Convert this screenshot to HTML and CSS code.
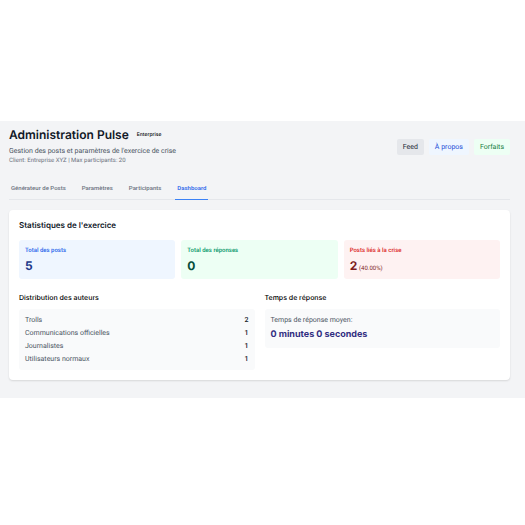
FILE: index.html
```html
<!doctype html>
<html lang="fr">
<head>
  <meta charset="utf-8">
  <title>Administration Pulse</title>
  <meta name="viewport" content="width=device-width, initial-scale=1">
  <link rel="stylesheet" href="styles.css">
</head>
<body>
  <div class="admin-page">
    <header class="page-header">
      <div>
        <div class="title-row">
          <h1>Administration Pulse</h1>
          <span class="plan-badge">Enterprise</span>
        </div>
        <p class="subtitle">Gestion des posts et paramètres de l'exercice de crise</p>
        <p class="client-info">Client: Entreprise XYZ | Max participants: 20</p>
      </div>
      <nav class="header-links">
        <a href="#feed" class="header-link gray">Feed</a>
        <a href="#about" class="header-link blue">À propos</a>
        <a href="#plans" class="header-link green">Forfaits</a>
      </nav>
    </header>

    <div class="tabs">
      <button type="button" class="tab">Générateur de Posts</button>
      <button type="button" class="tab">Paramètres</button>
      <button type="button" class="tab">Participants</button>
      <button type="button" class="tab active">Dashboard</button>
    </div>

    <main class="card">
      <h2>Statistiques de l'exercice</h2>
      <div class="stats">
        <div class="stat blue">
          <h3>Total des posts</h3>
          <p class="stat-value">5</p>
        </div>
        <div class="stat green">
          <h3>Total des réponses</h3>
          <p class="stat-value">0</p>
        </div>
        <div class="stat red">
          <h3>Posts liés à la crise</h3>
          <p class="stat-value">2 <span class="stat-percent">(40.00%)</span></p>
        </div>
      </div>

      <div class="details">
        <section>
          <h3 class="section-title">Distribution des auteurs</h3>
          <div class="box">
            <div class="author-row"><span>Trolls</span><span class="count">2</span></div>
            <div class="author-row"><span>Communications officielles</span><span class="count">1</span></div>
            <div class="author-row"><span>Journalistes</span><span class="count">1</span></div>
            <div class="author-row"><span>Utilisateurs normaux</span><span class="count">1</span></div>
          </div>
        </section>
        <section>
          <h3 class="section-title">Temps de réponse</h3>
          <div class="box">
            <p class="time-label">Temps de réponse moyen:</p>
            <p class="time-value">0 minutes 0 secondes</p>
          </div>
        </section>
      </div>
    </main>
  </div>
</body>
</html>
```

FILE: styles.css
```css
* {
  box-sizing: border-box;
}
body {
  margin: 0;
  padding-top: 121px;
  background: #fff;
  font-family: Roboto, Inter, sans-serif;
  font-size: 7px;
  line-height: 10px;
  text-rendering: geometricPrecision;
  color: #111827;
}
h1, h2, h3, p {
  margin: 0;
}
.admin-page {
  background: #f3f4f6;
  padding: 6px 15px 18px 9px;
}
.page-header {
  display: flex;
  justify-content: space-between;
  align-items: center;
  margin-bottom: 12px;
}
.title-row {
  display: flex;
  align-items: center;
  gap: 8px;
}
h1, h2, .section-title, .stat-value, .time-value {
  font-family: Inter, sans-serif;
}
h1 {
  font-size: 12px;
  line-height: 16px;
  font-weight: 600;
}
.plan-badge {
  font-family: Inter, sans-serif;
  font-size: 5px;
  font-weight: 500;
  color: #000;
}
.subtitle {
  margin-top: 3px;
  color: #4b5563;
}
.client-info {
  font-size: 6px;
  color: #6b7280;
}
.header-links {
  display: flex;
  gap: 5px;
}
.header-link {
  padding: 3px 6px;
  border-radius: 2px;
  text-decoration: none;
}
.header-link.gray {
  background: #e5e7eb;
  color: #1f2937;
}
.header-link.blue {
  background: #eff6ff;
  color: #1d4ed8;
}
.header-link.green {
  background: #edfff4;
  color: #15803d;
}
.tabs {
  display: flex;
  gap: 12px;
  margin-bottom: 10px;
  border-bottom: 1px solid #e5e7eb;
}
.tab {
  margin-bottom: -1px;
  padding: 5px 2px 6px;
  border: none;
  border-bottom: 1px solid transparent;
  background: none;
  font-family: inherit;
  font-size: 6px;
  line-height: 10px;
  font-weight: 500;
  color: #6b7280;
  cursor: pointer;
}
.tab.active {
  color: #2563eb;
  border-bottom-color: #3b82f6;
}
.card {
  padding: 10px;
  background: #fff;
  border-radius: 4px;
  box-shadow: 0 1px 2px rgba(0, 0, 0, 0.12);
}
h2 {
  margin-bottom: 10px;
  font-size: 8px;
  font-weight: 600;
}
.stats {
  display: grid;
  grid-template-columns: repeat(3, 1fr);
  gap: 6px;
  margin-bottom: 14px;
}
.stat {
  padding: 6px;
  border-radius: 3px;
}
.stat h3 {
  font-size: 6px;
  font-weight: 500;
}
.stat-value {
  margin-top: 2px;
  font-size: 12px;
  line-height: 15px;
  font-weight: 700;
}
.stat-percent {
  margin-left: -1px;
  font-family: Roboto, sans-serif;
  font-size: 6px;
  line-height: 6px;
  font-weight: 400;
}
.stat.blue {
  background: #eff6ff;
  color: #1e3a8a;
}
.stat.blue h3 {
  color: #2563eb;
}
.stat.green {
  background: #edfff4;
  color: #064e3b;
}
.stat.green h3 {
  color: #059669;
}
.stat.red {
  background: #fef2f2;
  color: #7f1d1d;
}
.stat.red h3 {
  color: #dc2626;
}
.details {
  display: grid;
  grid-template-columns: repeat(2, 1fr);
  gap: 10px;
}
.section-title {
  margin-bottom: 6px;
  font-size: 7px;
  font-weight: 500;
  color: #000;
}
.box {
  padding: 6px;
  background: #f9fafb;
  border-radius: 3px;
}
.author-row {
  display: flex;
  justify-content: space-between;
  color: #4b5563;
}
.author-row + .author-row {
  margin-top: 3px;
}
.count {
  font-weight: 500;
  color: #111827;
}
.time-label {
  color: #4b5563;
}
.time-value {
  margin-top: 3px;
  font-size: 9px;
  line-height: 14px;
  font-weight: 700;
  color: #312e81;
}
```
